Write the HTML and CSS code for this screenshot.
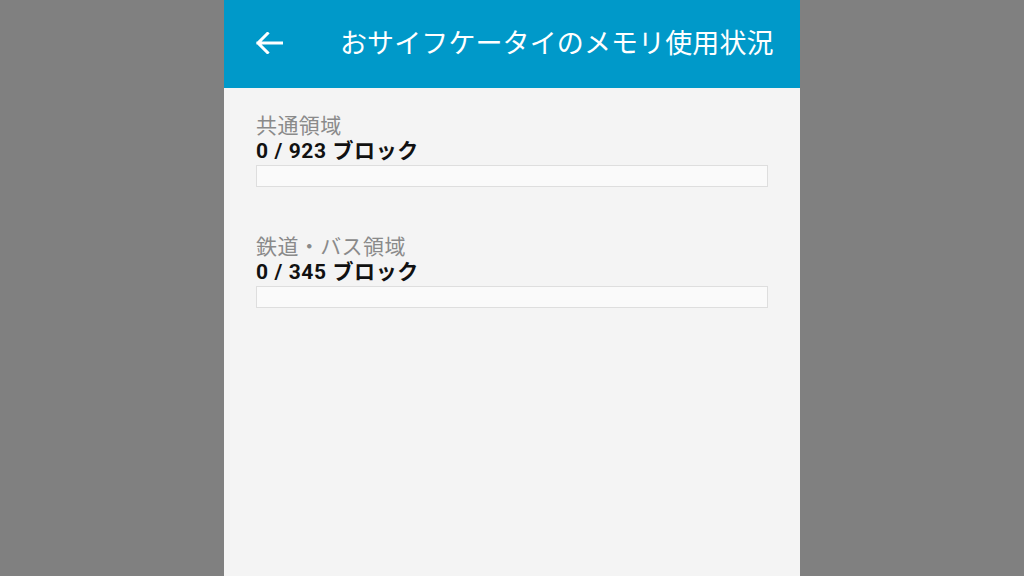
FILE: index.html
```html
<!DOCTYPE html>
<html lang="ja">
<head>
<meta charset="utf-8">
<link rel="stylesheet" href="styles.css">
</head>
<body>
<div class="phone">
  <header class="appbar">
    <svg class="back" width="28" height="22" viewBox="0 0 28 22"><path d="M3 11H27M12.5 1.5L3 11l9.5 9.5" fill="none" stroke="#fff" stroke-width="3" stroke-linecap="square" stroke-linejoin="miter"/></svg>
    <h1 class="title">おサイフケータイのメモリ使用状況</h1>
  </header>
  <main class="content">
    <section class="area">
      <div class="label">共通領域</div>
      <div class="value">0 / 923 ブロック</div>
      <div class="bar"></div>
    </section>
    <section class="area">
      <div class="label">鉄道・バス領域</div>
      <div class="value">0 / 345 ブロック</div>
      <div class="bar"></div>
    </section>
  </main>
</div>
</body>
</html>
```

FILE: styles.css
```css
html, body {
  margin: 0;
  padding: 0;
  background: #808080;
  font-family: Roboto, "Noto Sans CJK JP", sans-serif;
}
.phone {
  width: 576px;
  height: 576px;
  margin: 0 auto;
  background: #f4f4f4;
  overflow: hidden;
}
.appbar {
  height: 88px;
  background: #0099c9;
  display: flex;
  align-items: center;
  padding-left: 31px;
  box-sizing: border-box;
}
.back {
  display: block;
  margin-top: -2px;
}
.title {
  margin: 0 0 0 57px;
  color: #fff;
  font-weight: 400;
  font-size: 27px;
  line-height: 32px;
  letter-spacing: 0.1px;
}
.content {
  padding: 25px 32px 0;
}
.area {
  margin-bottom: 47px;
}
.label {
  color: #8a8a8a;
  font-size: 21px;
  line-height: 26px;
  letter-spacing: 0.4px;
}
.value {
  color: #111;
  font-weight: 700;
  font-size: 21px;
  line-height: 25px;
  letter-spacing: 0.6px;
}
.bar {
  margin-top: 1px;
  height: 22px;
  box-sizing: border-box;
  border: 1px solid #dedede;
  background: #fafafa;
}
```
